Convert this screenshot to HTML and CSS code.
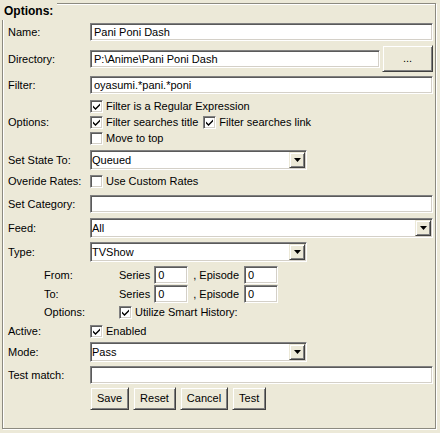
FILE: index.html
```html
<!DOCTYPE html>
<html>
<head>
<meta charset="utf-8">
<link rel="stylesheet" href="styles.css">
</head>
<body>
<div class="frame">
  <div class="title">Options:</div>

  <div class="row g3">
    <span class="lbl">Name:</span>
    <div class="field">Pani Poni Dash</div>
  </div>

  <div class="row h27">
    <span class="lbl">Directory:</span>
    <div class="field">P:\Anime\Pani Poni Dash</div>
    <div class="btn dirbtn">...</div>
  </div>

  <div class="row">
    <span class="lbl">Filter:</span>
    <div class="field">oyasumi.*pani.*poni</div>
  </div>

  <div class="row">
    <span class="lbl">Options:</span>
    <div class="checks">
      <div class="cline"><span class="cb"><svg viewBox="0 0 7 7" width="7" height="7"><path d="M0 2.5 L2.5 5 L7 0.5 L7 2.5 L2.5 7 L0 4.5 Z"/></svg></span><span class="ctext">Filter is a Regular Expression</span></div>
      <div class="cline"><span class="cb"><svg viewBox="0 0 7 7" width="7" height="7"><path d="M0 2.5 L2.5 5 L7 0.5 L7 2.5 L2.5 7 L0 4.5 Z"/></svg></span><span class="ctext">Filter searches title</span><span class="cb cb2"><svg viewBox="0 0 7 7" width="7" height="7"><path d="M0 2.5 L2.5 5 L7 0.5 L7 2.5 L2.5 7 L0 4.5 Z"/></svg></span><span class="ctext">Filter searches link</span></div>
      <div class="cline"><span class="cb"></span><span class="ctext">Move to top</span></div>
    </div>
  </div>

  <div class="row">
    <span class="lbl">Set State To:</span>
    <div class="select"><span class="val">Queued</span><span class="ddbtn"><svg viewBox="0 0 7 4" width="7" height="4"><path d="M0 0 H7 L3.5 4 Z"/></svg></span></div>
  </div>

  <div class="row g3">
    <span class="lbl">Overide Rates:</span>
    <div class="cline"><span class="cb"></span><span class="ctext">Use Custom Rates</span></div>
  </div>

  <div class="row g6">
    <span class="lbl">Set Category:</span>
    <div class="field"></div>
  </div>

  <div class="row g5">
    <span class="lbl">Feed:</span>
    <div class="select wide"><span class="val">All</span><span class="ddbtn"><svg viewBox="0 0 7 4" width="7" height="4"><path d="M0 0 H7 L3.5 4 Z"/></svg></span></div>
  </div>

  <div class="row">
    <span class="lbl">Type:</span>
    <div class="select"><span class="val">TVShow</span><span class="ddbtn"><svg viewBox="0 0 7 4" width="7" height="4"><path d="M0 0 H7 L3.5 4 Z"/></svg></span></div>
  </div>

  <div class="row sub">
    <span class="sublbl">From:</span>
    <span>Series</span>
    <div class="field num">0</div>
    <span class="ep">, Episode</span>
    <div class="field num">0</div>
  </div>

  <div class="row sub g1">
    <span class="sublbl">To:</span>
    <span>Series</span>
    <div class="field num">0</div>
    <span class="ep">, Episode</span>
    <div class="field num">0</div>
  </div>

  <div class="row sub subopt g1">
    <span class="sublbl">Options:</span>
    <div class="cline"><span class="cb"><svg viewBox="0 0 7 7" width="7" height="7"><path d="M0 2.5 L2.5 5 L7 0.5 L7 2.5 L2.5 7 L0 4.5 Z"/></svg></span><span class="ctext">Utilize Smart History:</span></div>
  </div>

  <div class="row g3">
    <span class="lbl">Active:</span>
    <div class="cline"><span class="cb"><svg viewBox="0 0 7 7" width="7" height="7"><path d="M0 2.5 L2.5 5 L7 0.5 L7 2.5 L2.5 7 L0 4.5 Z"/></svg></span><span class="ctext">Enabled</span></div>
  </div>

  <div class="row g3">
    <span class="lbl">Mode:</span>
    <div class="select"><span class="val">Pass</span><span class="ddbtn"><svg viewBox="0 0 7 4" width="7" height="4"><path d="M0 0 H7 L3.5 4 Z"/></svg></span></div>
  </div>

  <div class="row">
    <span class="lbl">Test match:</span>
    <div class="field"></div>
  </div>

  <div class="row g3">
    <span class="lbl"></span>
    <div class="buttons">
      <div class="btn">Save</div>
      <div class="btn">Reset</div>
      <div class="btn">Cancel</div>
      <div class="btn">Test</div>
    </div>
  </div>
</div>
</body>
</html>
```

FILE: styles.css
```css
* { box-sizing: border-box; }

html, body {
  margin: 0;
  padding: 0;
}

body {
  background: #ECE9D8;
  font: 11px "Liberation Sans", Arial, sans-serif;
  color: #000;
  width: 440px;
  height: 433px;
  overflow: hidden;
  padding-top: 3px;
}

.frame {
  margin: 0 4px 0 2px;
  height: 426px;
  border: 1px solid #8c8a80;
  box-shadow: 1px 1px 0 #fff, inset 1px 1px 0 #fff;
  padding: 0 2px 0 5px;
  display: flex;
  flex-direction: column;
}

.title {
  align-self: flex-start;
  margin: -4px 0 0 -8px;
  padding: 2px 4px 0;
  height: 20px;
  line-height: 18px;
  font-size: 12px;
  font-weight: bold;
  background: #ECE9D8;
}

.row {
  display: flex;
  align-items: center;
  margin-top: 4px;
  flex: none;
  white-space: nowrap;
}
.row.g1 { margin-top: 1px; }
.row.g3 { margin-top: 3px; }
.row.g5 { margin-top: 5px; }
.row.g6 { margin-top: 6px; }
.row.h27 { height: 27px; }

.lbl {
  width: 82px;
  flex: none;
}

.field {
  flex: 1;
  height: 18px;
  background: #fff;
  border: 1px solid;
  border-color: #808080 #fff #fff #808080;
  box-shadow: inset 1px 1px 0 #5a5a5a, inset -1px -1px 0 #d4d0c8;
  padding: 0 3px;
  line-height: 16px;
  overflow: hidden;
}

.field.num {
  flex: none;
  width: 34px;
  margin-left: 4px;
}

.ep { margin-left: 5px; }
.ep + .field.num { margin-left: 5px; }

.btn {
  height: 23px;
  padding: 0 6px;
  line-height: 21px;
  text-align: center;
  background: #ECE9D8;
  border: 1px solid;
  border-color: #ECE9D8 #404040 #404040 #ECE9D8;
  box-shadow: inset 1px 1px 0 #fff, inset -1px -1px 0 #808080;
}

.dirbtn {
  width: 51px;
  height: 27px;
  line-height: 25px;
  margin-left: 2px;
  flex: none;
}

.checks {
  display: flex;
  flex-direction: column;
}

.cline {
  display: flex;
  align-items: center;
  height: 16px;
}

.cb {
  width: 13px;
  height: 13px;
  flex: none;
  background: #fff;
  border: 1px solid;
  border-color: #808080 #fff #fff #808080;
  box-shadow: inset 1px 1px 0 #5a5a5a, inset -1px -1px 0 #d4d0c8;
  display: flex;
  align-items: center;
  justify-content: center;
}
.cb svg { display: block; fill: #000; }
.cb2 { margin-left: 5px; }

.ctext { margin-left: 3px; }

.select {
  display: flex;
  align-items: center;
  width: 217px;
  height: 20px;
  padding: 1px;
  background: #fff;
  border: 1px solid;
  border-color: #808080 #fff #fff #808080;
  box-shadow: inset 1px 1px 0 #5a5a5a, inset -1px -1px 0 #d4d0c8;
}
.select.wide { width: auto; flex: 1; }

.select .val {
  flex: 1;
  line-height: 16px;
}

.ddbtn {
  width: 16px;
  height: 16px;
  flex: none;
  background: #ECE9D8;
  border: 1px solid;
  border-color: #ECE9D8 #404040 #404040 #ECE9D8;
  box-shadow: inset 1px 1px 0 #fff, inset -1px -1px 0 #808080;
  display: flex;
  align-items: center;
  justify-content: center;
}
.ddbtn svg { display: block; fill: #000; }

.sub { padding-left: 36px; height: 18px; }
.sub.subopt { height: 16px; }

.sublbl {
  width: 75px;
  flex: none;
}

.buttons {
  display: flex;
  gap: 4px;
}
```
